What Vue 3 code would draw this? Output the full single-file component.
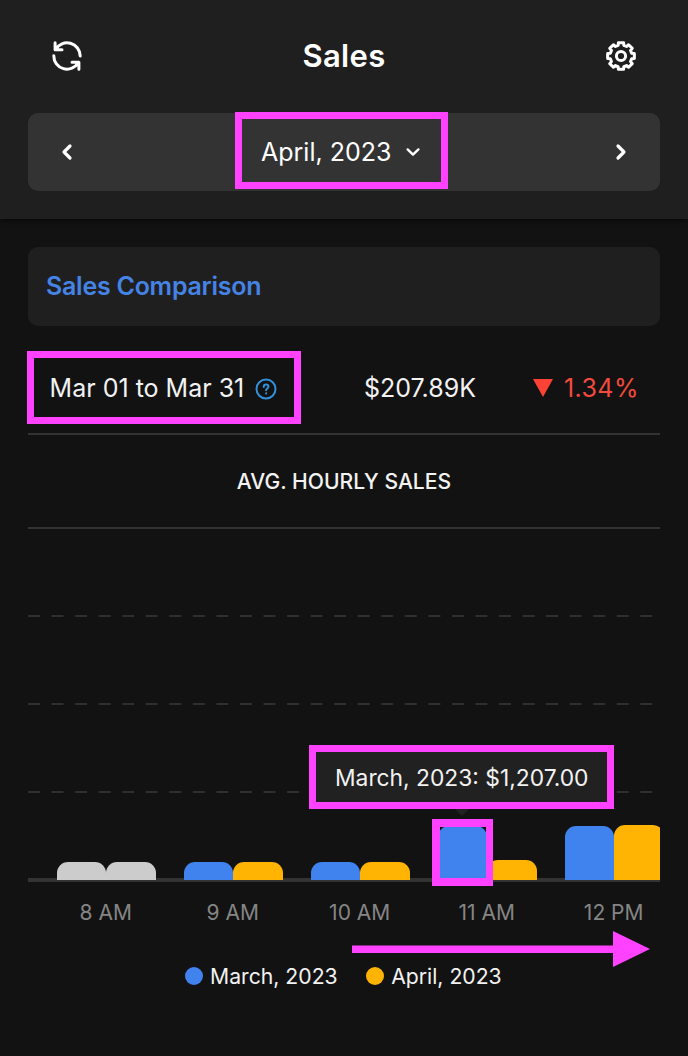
<!-- SalesView.vue -->
<script setup>
import { ref } from 'vue'

const month = ref('April, 2023')

const hours = [
  { label: '8 AM', march: 18, april: 18, closed: true },
  { label: '9 AM', march: 18, april: 18 },
  { label: '10 AM', march: 18, april: 18 },
  { label: '11 AM', march: 54, april: 20, selected: true },
  { label: '12 PM', march: 54, april: 55 }
]

// outline of an 8-tooth gear around 0,0
const point = (deg, r) => {
  const a = (deg * Math.PI) / 180
  return `${(r * Math.cos(a)).toFixed(2)} ${(r * Math.sin(a)).toFixed(2)}`
}

const gearPath = () => {
  const parts = []
  for (let i = 0; i < 8; i++) {
    const a = i * 45
    parts.push(point(a - 11, 13.6), point(a + 11, 13.6), point(a + 15, 11), point(a + 30, 11))
  }
  return `M${parts.join('L')}Z`
}
</script>

<template>
  <div class="sales">
    <header class="header">
      <div class="title-bar">
        <svg class="icon" viewBox="-16 -16 32 32">
          <path d="M-11.9 -13.2V-6.3H-5M-11.4 -6.6A13.2 13.2 0 0 1 13.2 0M11.9 13.2V6.3H5M11.4 6.6A13.2 13.2 0 0 1 -13.2 -.3" />
        </svg>
        <h1>Sales</h1>
        <svg class="icon" viewBox="-16 -16 32 32">
          <path :d="gearPath()" />
          <circle r="4.6" />
        </svg>
      </div>

      <div class="picker">
        <svg class="chevron" viewBox="0 0 16 20"><path d="M11 4L5 10L11 16" /></svg>
        <div class="month outlined">
          <span class="month-text">{{ month }}</span>
          <svg class="caret" viewBox="0 0 16 12"><path d="M2.6 3.4L8 8.6L13.4 3.4" /></svg>
        </div>
        <svg class="chevron" viewBox="0 0 16 20"><path d="M5 4L11 10L5 16" /></svg>
      </div>
    </header>

    <main class="content">
      <div class="card">Sales Comparison</div>

      <div class="summary">
        <div class="range outlined">
          <span class="range-text">Mar 01 to Mar 31</span>
          <svg class="help" viewBox="0 0 22 22">
            <circle cx="11" cy="11" r="9.5" />
            <path d="M8.7 8.9C8.8 7.4 9.8 6.6 11.1 6.6C12.5 6.6 13.4 7.5 13.4 8.7C13.4 10.4 11.1 10.5 11.1 12.3M11.1 15.2V15.4" />
          </svg>
        </div>
        <span class="total">$207.89K</span>
        <span class="change">
          <svg class="down" viewBox="0 0 20 18"><path d="M0 0H20L10 18Z" /></svg>
          <span class="percent">1.34%</span>
        </span>
      </div>

      <h2>AVG. HOURLY SALES</h2>

      <div class="chart">
        <div class="grid">
          <svg v-for="n in 4" :key="n" class="grid-row" viewBox="0 0 632 88">
            <line v-if="n < 4" x1="0" y1="87" x2="625" y2="87" />
          </svg>
        </div>
        <div class="bars">
          <div v-for="hour in hours" :key="hour.label" class="group" :class="{ closed: hour.closed }">
            <div class="bar march" :style="{ height: hour.march + 'px' }"></div>
            <div class="bar april" :style="{ height: hour.april + 'px' }"></div>
            <div v-if="hour.selected" class="marker"></div>
          </div>
        </div>
        <div class="tooltip outlined">
          <span class="tooltip-text">March, 2023: $1,207.00</span>
        </div>
      </div>

      <div class="labels">
        <span v-for="hour in hours" :key="hour.label">{{ hour.label }}</span>
      </div>

      <svg class="arrow" viewBox="0 0 298 36">
        <path d="M0 14.5H261V0L298 18L261 36V22H0Z" />
      </svg>

      <div class="legend">
        <span class="item"><i class="dot march"></i><span>March, 2023</span></span>
        <span class="item"><i class="dot april"></i><span>April, 2023</span></span>
      </div>
    </main>
  </div>
</template>

<style>
body {
  background: #121212;
}
</style>

<style scoped>
.sales {
  width: 688px;
  height: 1056px;
  overflow: hidden;
  background: #121212;
  color: #f2f2f2;
  font-family: Inter, "Liberation Sans", sans-serif;
  font-size: 25px;
  white-space: nowrap;
}

.sales * {
  box-sizing: border-box;
}

svg {
  display: block;
  flex: none;
  fill: none;
  stroke: #fff;
  stroke-linecap: round;
  stroke-linejoin: round;
}

.outlined {
  border: 7px solid #ff42ff;
}

.header {
  height: 219px;
  background: #1f1f1f;
  box-shadow: 0 2px 5px rgba(0, 0, 0, 0.5);
}

.title-bar {
  display: flex;
  align-items: center;
  justify-content: space-between;
  height: 113px;
  padding: 0 51px 1px;
}

.icon {
  width: 32px;
  height: 32px;
  stroke-width: 3;
}

h1 {
  margin: 0;
  padding-bottom: 2px;
  color: #fff;
  font-size: 31px;
  font-weight: 600;
  letter-spacing: 0.3px;
}

.picker {
  display: flex;
  align-items: center;
  justify-content: space-between;
  height: 77.5px;
  margin: 0 28px;
  padding: 0 31px;
  border-radius: 10px;
  background: #333;
}

.chevron {
  width: 16px;
  height: 20px;
  stroke-width: 3.2;
}

.month {
  display: flex;
  align-items: center;
  width: 213px;
  height: 77px;
  margin: 0 0 2px -5px;
  padding: 2px 0 0 19px;
  color: #fff;
}

.caret {
  width: 16px;
  height: 12px;
  margin-left: 14px;
  stroke-width: 2.4;
}

.content {
  padding: 28px 28px 0;
}

.card {
  display: flex;
  align-items: center;
  height: 79px;
  padding: 0 0 2px 18px;
  border-radius: 10px;
  background: #1f1f1f;
  color: #4583e5;
  font-weight: 600;
  letter-spacing: -0.25px;
}

.summary {
  display: flex;
  align-items: center;
  height: 109px;
  padding-top: 15px;
  border-bottom: 2px solid #333;
}

.range {
  display: flex;
  align-items: center;
  width: 274px;
  height: 73px;
  margin-left: -1px;
  padding: 1px 0 0 15.6px;
}

.help {
  width: 22px;
  height: 22px;
  margin: 3px 0 0 10.6px;
  stroke: #3391dc;
  stroke-width: 2;
}

.total {
  margin-left: 63px;
  padding-top: 1px;
}

.change {
  display: flex;
  align-items: center;
  margin-left: 57px;
  padding-top: 1px;
  color: #f34b3d;
}

.down {
  width: 20px;
  height: 18px;
  margin-right: 11px;
  fill: #fc4234;
  stroke: none;
}

.percent {
  letter-spacing: 0.4px;
}

h2 {
  display: flex;
  align-items: center;
  justify-content: center;
  height: 94px;
  margin: 0;
  border-bottom: 2px solid #333;
  font-size: 21.1px;
  font-weight: 500;
}

.chart {
  position: relative;
  height: 353px;
  border-bottom: 2px solid #333;
}

.grid-row {
  width: 632px;
  height: 88px;
  stroke: #2f2f2f;
  stroke-width: 2;
  stroke-dasharray: 12 11.55;
  stroke-linecap: butt;
}

.bars {
  position: absolute;
  inset: 0;
  display: flex;
  gap: 28px;
  padding-left: 28.5px;
  background: linear-gradient(#333, #333) left bottom / 100% 2px no-repeat;
  /* clips the last bar at the side, lets the marker hang below the axis */
  clip-path: inset(0 0 -10px 0);
}

.group {
  position: relative;
  display: flex;
  flex: none;
  align-items: flex-end;
  width: 99px;
}

.bar {
  width: 49.5px;
  border-radius: 11px 11px 0 0;
}

.march {
  background: #4183ee;
}

.april {
  background: #ffb302;
}

.closed .bar {
  background: #ccc;
}

.marker {
  position: absolute;
  left: -6px;
  bottom: -6px;
  width: 61px;
  height: 67px;
  border: 8px solid #ff42ff;
  border-right-width: 7px;
}

.tooltip {
  position: absolute;
  left: 281px;
  top: 216px;
  display: flex;
  align-items: center;
  width: 305px;
  height: 64px;
  padding: 1px 0 0 19px;
  background: #212121;
  font-size: 22.8px;
}

.tooltip::after {
  content: "";
  position: absolute;
  left: 139px;
  top: 57px;
  border: 7px solid transparent;
  border-top-color: #212121;
}

.labels {
  display: flex;
  gap: 28px;
  height: 48.5px;
  padding: 18px 0 0 28.2px;
  color: #858585;
  font-size: 21px;
}

.labels span {
  flex: none;
  width: 99px;
  text-align: center;
}

.arrow {
  width: 298px;
  height: 36px;
  margin-left: 324px;
  fill: #ff42ff;
  stroke: none;
}

.legend {
  display: flex;
  gap: 28.5px;
  height: 19px;
  padding-left: 157px;
  font-size: 21.2px;
}

.item {
  display: flex;
  align-items: center;
  gap: 7px;
}

.dot {
  width: 18px;
  height: 18px;
  border-radius: 50%;
}
</style>
